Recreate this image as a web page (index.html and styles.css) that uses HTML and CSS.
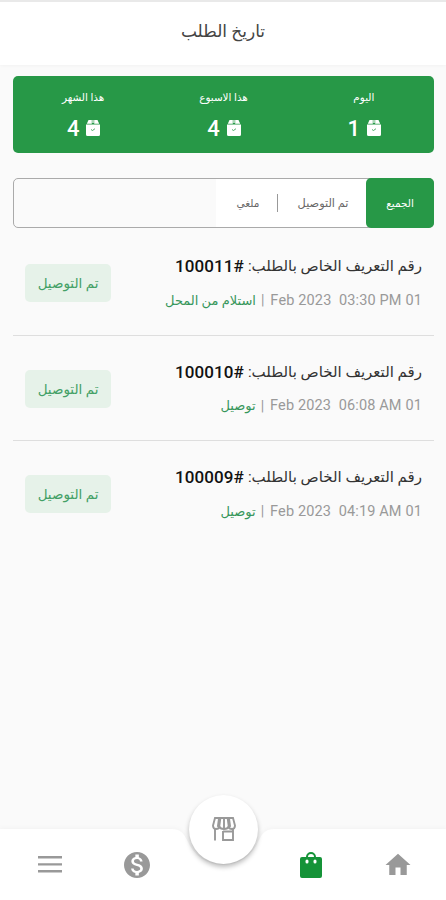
FILE: index.html
```html
<!DOCTYPE html>
<html lang="ar" dir="rtl">
<head>
<meta charset="utf-8">
<title>تاريخ الطلب</title>
<link rel="stylesheet" href="styles.css">
</head>
<body>
<svg class="defs" width="0" height="0" aria-hidden="true">
  <symbol id="box" viewBox="0 0 14 16"><path fill="#fff" d="M2.500 0h3.300v3.800H.8zM8.200 0h3.300l1.700 3.800H8.200zM6.400 0h1.200v3H6.400zM0 4.500h14V14.500a1.500 1.500 0 0 1-1.500 1.500h-11A1.500 1.500 0 0 1 0 14.500z"/><path d="M5 9.500l1.500 1 2.500-1.800" fill="none" stroke="#279847" stroke-width=".8"/></symbol>
</svg>
<div class="screen">
  <header class="header"><h1>تاريخ الطلب</h1></header>
  <main class="content">
    <section class="stats">
      <div class="stat"><span class="stat-label">اليوم</span><div class="stat-value"><svg><use href="#box"/></svg><b>1</b></div></div>
      <div class="stat"><span class="stat-label">هذا الاسبوع</span><div class="stat-value"><svg><use href="#box"/></svg><b>4</b></div></div>
      <div class="stat"><span class="stat-label">هذا الشهر</span><div class="stat-value"><svg><use href="#box"/></svg><b>4</b></div></div>
    </section>
    <nav class="tabs">
      <span class="tab tab-all">الجميع</span>
      <span class="tab tab-done">تم التوصيل</span>
      <span class="tab tab-cancel">ملغي</span>
    </nav>
    <section class="orders">
      <article class="order">
        <div class="info">
          <div class="title"><span class="ar">رقم التعريف الخاص بالطلب:</span><span class="num" dir="ltr">100011#</span></div>
          <div class="meta"><span class="date" dir="ltr">Feb 2023&nbsp; 03:30 PM 01</span><span class="bar">|</span><span class="kind">استلام من المحل</span></div>
        </div>
        <span class="badge">تم التوصيل</span>
      </article>
      <article class="order">
        <div class="info">
          <div class="title"><span class="ar">رقم التعريف الخاص بالطلب:</span><span class="num" dir="ltr">100010#</span></div>
          <div class="meta"><span class="date" dir="ltr">Feb 2023&nbsp; 06:08 AM 01</span><span class="bar">|</span><span class="kind">توصيل</span></div>
        </div>
        <span class="badge">تم التوصيل</span>
      </article>
      <article class="order">
        <div class="info">
          <div class="title"><span class="ar">رقم التعريف الخاص بالطلب:</span><span class="num" dir="ltr">100009#</span></div>
          <div class="meta"><span class="date" dir="ltr">Feb 2023&nbsp; 04:19 AM 01</span><span class="bar">|</span><span class="kind">توصيل</span></div>
        </div>
        <span class="badge">تم التوصيل</span>
      </article>
    </section>
  </main>
  <footer class="bottom">
    <svg class="bottom-shape" viewBox="0 0 446 76"><path d="M0 5H171C181 5 183 9 187 16C194 32 207 41 223 41S252 32 259 16C263 9 265 5 275 5H446V76H0z"/></svg>
    <div class="nav">
      <svg viewBox="0 0 24 24" class="home"><path d="M10 20v-6h4v6h5v-8h3L12 3 2 12h3v8z"/></svg>
      <svg viewBox="0 0 22 26" class="bag"><path fill-rule="evenodd" d="M2 5H6A5 5 0 0 1 16 5H20A2 2 0 0 1 22 7V24A2 2 0 0 1 20 26H2A2 2 0 0 1 0 24V7A2 2 0 0 1 2 5zM8 5H14A3 3 0 0 0 8 5zM7 7.500A1.500 1.500 0 0 0 5.500 9V10A1.500 1.500 0 0 0 8.500 10V9A1.500 1.500 0 0 0 7 7.500zM15 7.500A1.500 1.500 0 0 0 13.500 9V10A1.500 1.500 0 0 0 16.500 10V9A1.500 1.500 0 0 0 15 7.500z"/></svg>
      <span></span>
      <svg viewBox="2 2 20 20" class="coin"><path d="M12 2C6.480 2 2 6.480 2 12s4.480 10 10 10 10-4.480 10-10S17.520 2 12 2zm1.410 16.090V20h-2.670v-1.930c-1.710-.36-3.160-1.460-3.270-3.400h1.960c.1 1.050.82 1.870 2.650 1.870 1.960 0 2.400-.98 2.400-1.590 0-.83-.44-1.610-2.670-2.140-2.480-.6-4.180-1.620-4.180-3.670 0-1.720 1.390-2.840 3.110-3.210V4h2.670v1.950c1.860.45 2.790 1.860 2.850 3.390H14.300c-.05-1.110-.64-1.870-2.220-1.870-1.500 0-2.400.68-2.400 1.640 0 .84.65 1.390 2.670 1.910s4.180 1.390 4.180 3.910c-.01 1.830-1.380 2.830-3.120 3.160z"/></svg>
      <svg viewBox="0 0 24 17" class="menu"><path d="M0 0h24v2.600H0zM0 7.200h24V9.600H0zM0 14h24v2.600H0z"/></svg>
    </div>
    <div class="fab"><svg viewBox="0 0 24 24"><g fill="none" stroke="#999" stroke-width="1.900"><path d="M3 1H21L23 8.500Q23 12 20 12Q17 12 16.500 9.500Q16 12 12 12Q8 12 7.500 9.500Q7 12 4 12Q1 12 1 8.500z"/><path d="M12 1V12M3 12V23.500M11 14V23H21V12M11 14.500H21"/><path stroke-width="3.200" d="M7.700 1L6.500 10M16.300 1L17.500 10"/></g></svg></div>
  </footer>
</div>
</body>
</html>
```
FILE: styles.css
```css
* { box-sizing: border-box; }
body { margin: 0; background: #fafafa; font-family: Roboto, "DejaVu Sans", sans-serif; }
.defs { position: absolute; }
.screen { width: 446px; height: 900px; display: flex; flex-direction: column; overflow: hidden; }
.header { height: 65px; flex: none; background: #fff; border-top: 2px solid #e9e9e9; box-shadow: 0 1px 3px #00000008; display: flex; justify-content: center; align-items: center; padding-bottom: 6px; }
h1 { margin: 0; font-size: 17px; font-weight: 400; color: #444; }
.content { flex: 1; padding: 11px 12px 0 13px; }
.stats { height: 77px; border-radius: 5px; background: #279847; display: grid; grid-template-columns: repeat(3, 1fr); color: #fff; }
.stat { display: flex; flex-direction: column; align-items: center; padding-top: 13px; }
.stat-label { font-size: 10.400px; line-height: 18px; }
.stat-value { display: flex; gap: 7px; align-items: center; height: 26px; margin-top: 8px; margin-left: 1px; }
.stat-value svg { width: 14px; height: 16px; }
.stat-value b { font-size: 22px; font-weight: 500; line-height: 26px; position: relative; top: 1px; }
.tabs { display: flex; height: 50px; margin-top: 25px; border: 1px solid #aaa; border-radius: 5px; font-size: 10.500px; color: #666; }
.tab { display: flex; align-items: center; justify-content: center; background: #fff; position: relative; }
.tab-all { width: 68px; margin: -1px -1px -1px 0; border-radius: 5px; background: #279847; color: #fff; z-index: 1; }
.tab-done { width: 89px; margin-right: -3px; font-size: 11.300px; padding-right: 3px; }
.tab-cancel { width: 64px; }
.tab-cancel::before { content: ""; width: 1px; height: 18px; background: #999; position: absolute; right: 2px; top: 15px; }
.orders { padding-top: 2px; }
.order { height: 105.500px; display: flex; justify-content: space-between; align-items: flex-start; padding: 24px 12px 0; border-bottom: 1px solid #dedede; }
.order:last-child { border-bottom: 0; }
.title { display: flex; align-items: center; height: 24px; color: #333; white-space: nowrap; }
.title .ar { font-size: 15px; }
.num { font-size: 17px; font-weight: 500; color: #111; margin-right: 4px; letter-spacing: .1px; }
.meta { display: flex; align-items: center; height: 22px; margin-top: 11px; font-size: 14px; color: #999; white-space: nowrap; }
.date { font-size: 14.500px; letter-spacing: .15px; }
.bar { margin: 0 6px 0 5px; }
.kind { color: #36965a; font-size: 13px; }
.badge { width: 86px; height: 38px; margin-top: 10px; border-radius: 5px; background: #e6f2e9; color: #43a066; font-size: 13.500px; display: flex; align-items: center; justify-content: center; white-space: nowrap; }
.bottom { position: relative; height: 76px; flex: none; }
.bottom-shape { display: block; width: 446px; height: 76px; fill: #fff; filter: drop-shadow(0 -1px 2px #00000008); }
.nav { position: absolute; inset: 5px 5px 0 6px; display: grid; grid-template-columns: repeat(5, 1fr); justify-items: center; align-items: center; fill: #999; }
.home { width: 30px; height: 30px; }
.bag { width: 22px; height: 26px; fill: #159338; }
.coin { width: 26px; height: 26px; }
.menu { width: 24px; height: 17px; }
.fab { position: absolute; left: 189px; top: -29px; width: 69px; height: 69px; border-radius: 50%; background: #fff; box-shadow: 0 3px 5px #00000045; display: flex; align-items: center; justify-content: center; }
.fab svg { width: 24px; height: 24px; margin-top: -2px; }
```
